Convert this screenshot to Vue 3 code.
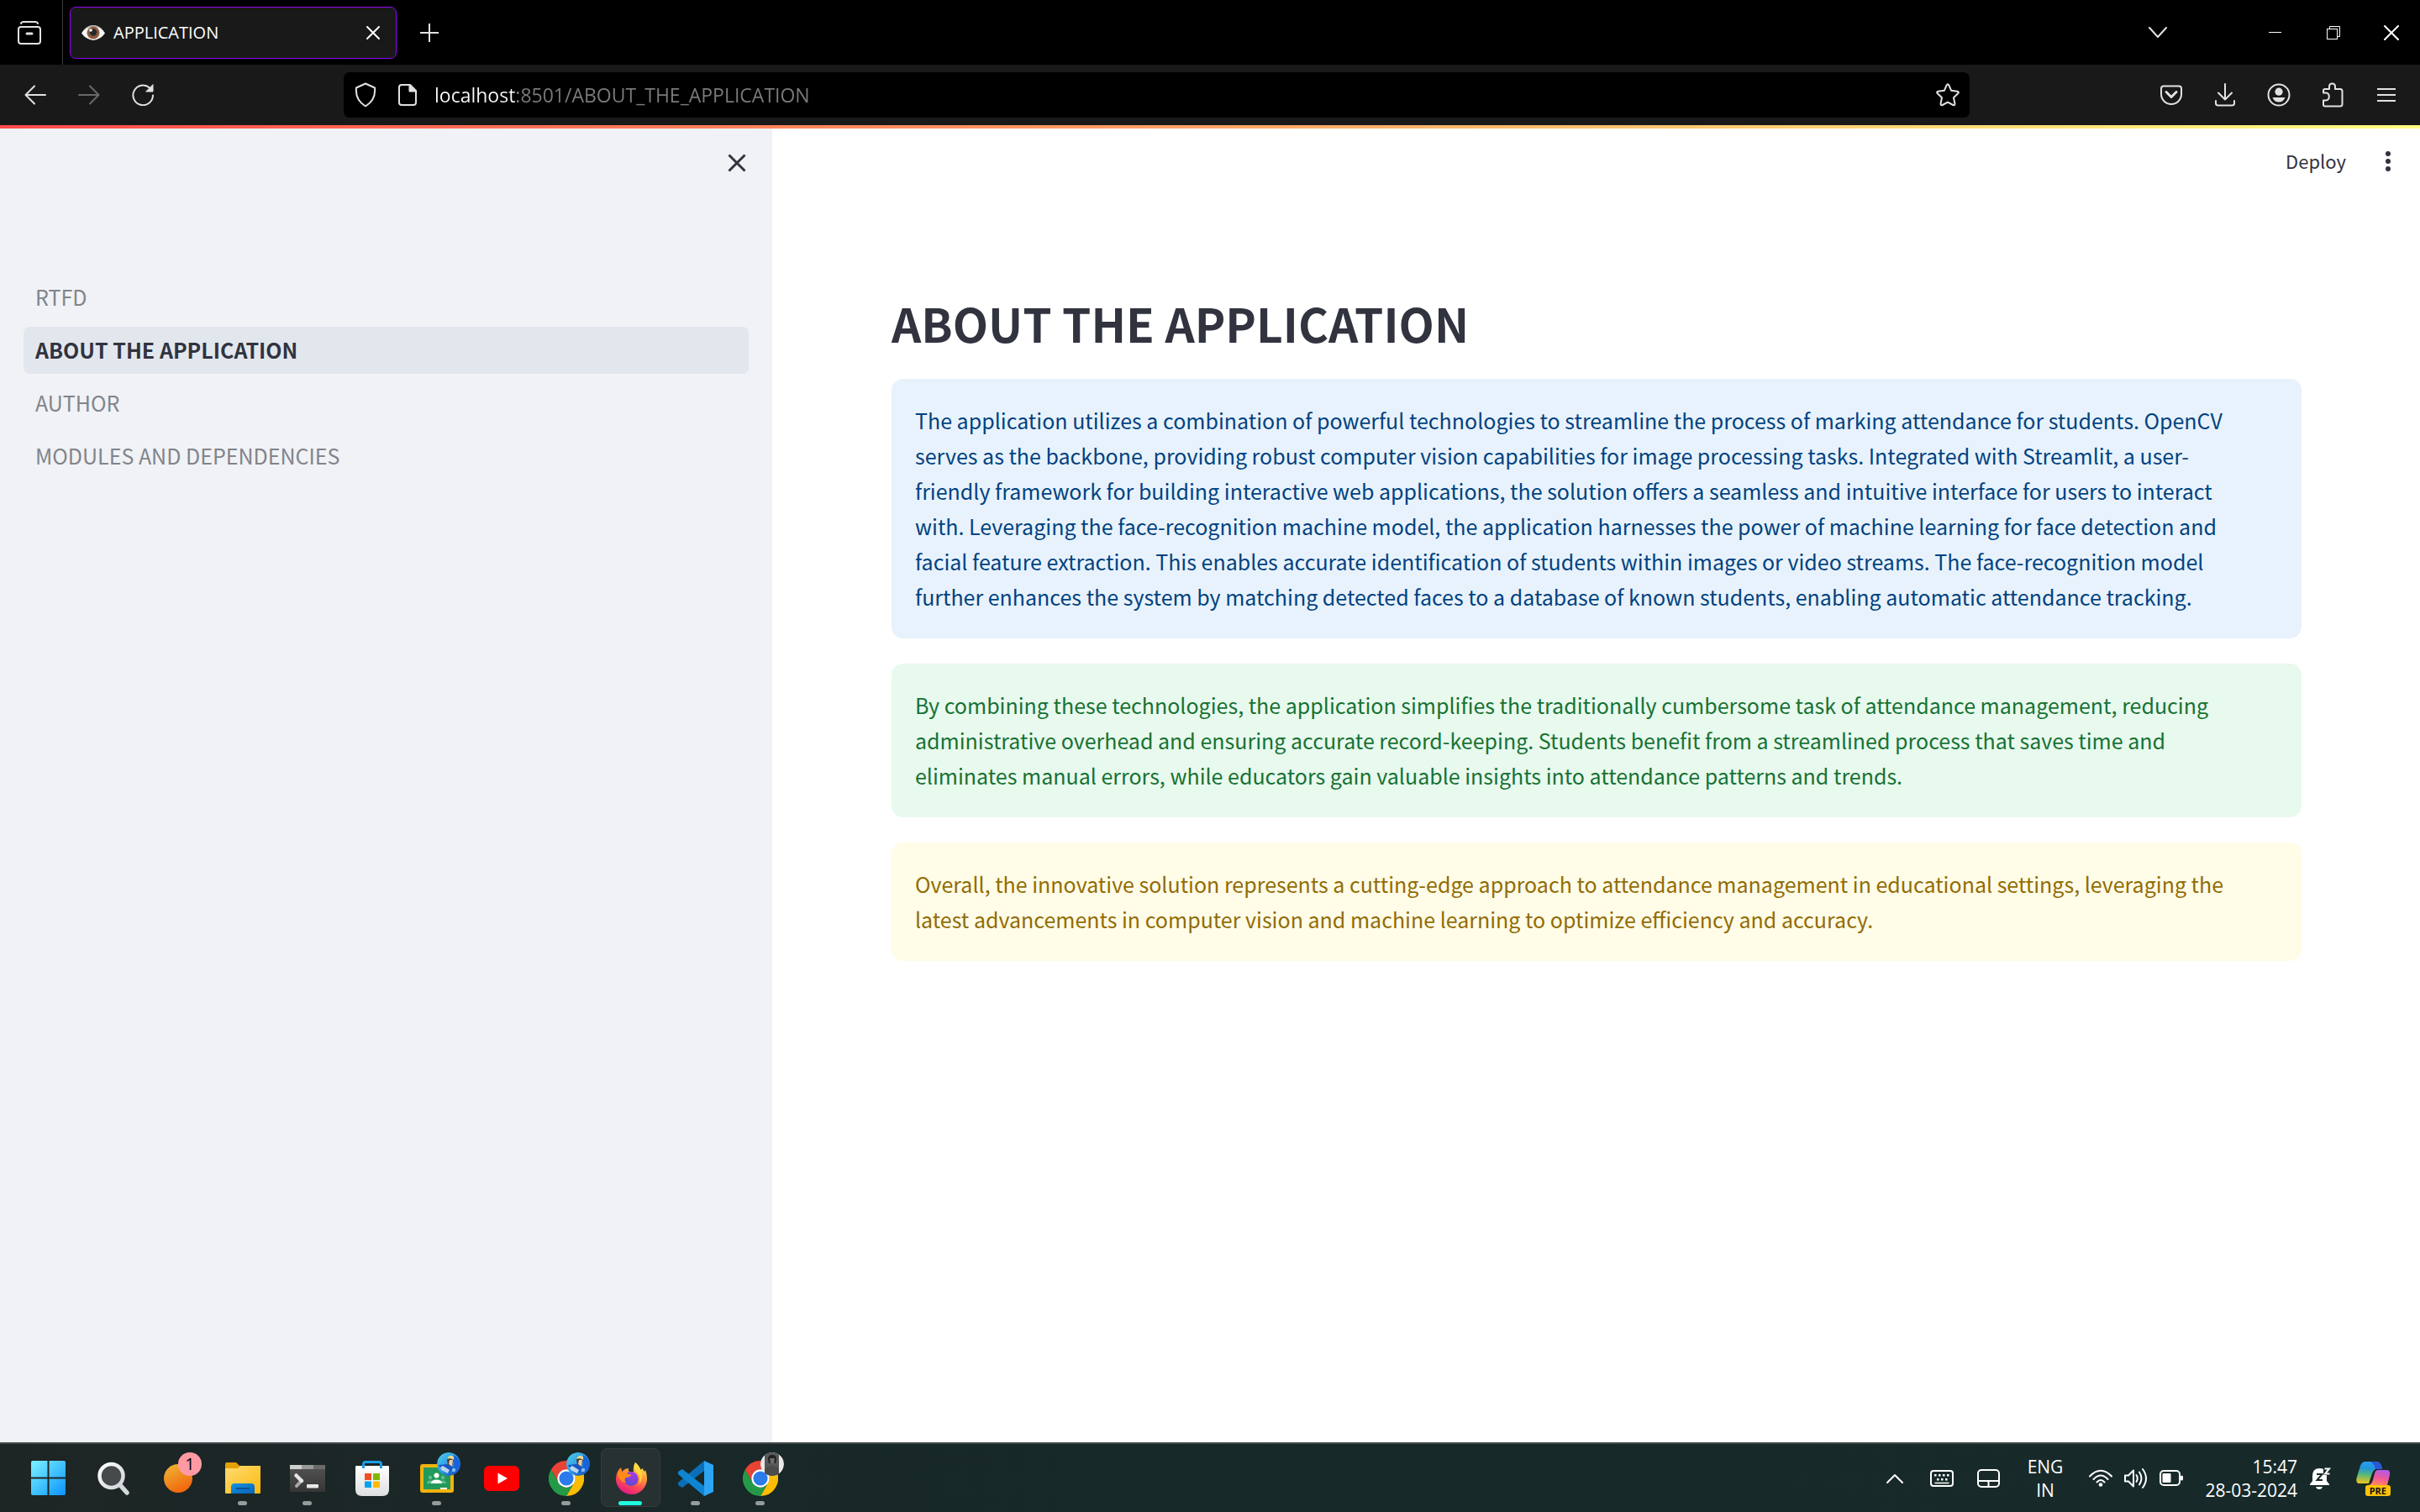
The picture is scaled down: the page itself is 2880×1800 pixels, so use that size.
<script setup>
import { ref } from 'vue'

const address = ref('localhost:8501/ABOUT_THE_APPLICATION')

const pages = [
  { name: 'RTFD' },
  { name: 'ABOUT THE APPLICATION', active: true },
  { name: 'AUTHOR' },
  { name: 'MODULES AND DEPENDENCIES' },
]

const alerts = [
  {
    kind: 'info',
    text: 'The application utilizes a combination of powerful technologies to streamline the process of marking attendance for students. OpenCV serves as the backbone, providing robust computer vision capabilities for image processing tasks. Integrated with Streamlit, a user-friendly framework for building interactive web applications, the solution offers a seamless and intuitive interface for users to interact with. Leveraging the face-recognition machine model, the application harnesses the power of machine learning for face detection and facial feature extraction. This enables accurate identification of students within images or video streams. The face-recognition model further enhances the system by matching detected faces to a database of known students, enabling automatic attendance tracking.',
  },
  {
    kind: 'success',
    text: 'By combining these technologies, the application simplifies the traditionally cumbersome task of attendance management, reducing administrative overhead and ensuring accurate record-keeping. Students benefit from a streamlined process that saves time and eliminates manual errors, while educators gain valuable insights into attendance patterns and trends.',
  },
  {
    kind: 'warning',
    text: 'Overall, the innovative solution represents a cutting-edge approach to attendance management in educational settings, leveraging the latest advancements in computer vision and machine learning to optimize efficiency and accuracy.',
  },
]
</script>

<template>
  <div class="screen">
    <svg class="defs" aria-hidden="true">
      <defs>
        <linearGradient id="gWin" x1="0" y1="0" x2="1" y2="1"><stop offset="0" stop-color="#7df3ff" /><stop offset="1" stop-color="#0a93ff" /></linearGradient>
        <linearGradient id="gLens" x1="0" y1="0" x2="1" y2="1"><stop offset="0" stop-color="#ffffff" /><stop offset="1" stop-color="#cfd4da" /></linearGradient>
        <linearGradient id="gOrange" x1="0.2" y1="0" x2="0.7" y2="1"><stop offset="0" stop-color="#eeb233" /><stop offset="1" stop-color="#f2620c" /></linearGradient>
        <linearGradient id="gFolder" x1="0" y1="0" x2="1" y2="1"><stop offset="0" stop-color="#ffdc74" /><stop offset="1" stop-color="#fbb90c" /></linearGradient>
        <linearGradient id="gBlue" x1="0" y1="0" x2="1" y2="1"><stop offset="0" stop-color="#1593e0" /><stop offset="1" stop-color="#0862b8" /></linearGradient>
        <linearGradient id="gTerm" x1="0" y1="0" x2="0" y2="1"><stop offset="0" stop-color="#545454" /><stop offset="1" stop-color="#363636" /></linearGradient>
        <linearGradient id="gBag" x1="0" y1="0" x2="0" y2="1"><stop offset="0" stop-color="#ffffff" /><stop offset="1" stop-color="#dedfe1" /></linearGradient>
        <linearGradient id="gFox" x1="0.8" y1="0" x2="0.3" y2="1"><stop offset="0" stop-color="#fff44f" /><stop offset="0.35" stop-color="#ffa136" /><stop offset="0.65" stop-color="#ff4f50" /><stop offset="1" stop-color="#e31587" /></linearGradient>
        <radialGradient id="gGlobe" cx="0.6" cy="0.2" r="0.8"><stop offset="0" stop-color="#a838e8" /><stop offset="1" stop-color="#5a4bd0" /></radialGradient>
        <linearGradient id="gCopL" x1="0.3" y1="0" x2="0.2" y2="1"><stop offset="0" stop-color="#2a9df0" /><stop offset="0.3" stop-color="#2196d8" /><stop offset="0.6" stop-color="#5cb975" /><stop offset="1" stop-color="#f5c417" /></linearGradient>
        <linearGradient id="gCopR" x1="0.6" y1="0" x2="0.3" y2="1"><stop offset="0" stop-color="#b25ae6" /><stop offset="0.5" stop-color="#f0589a" /><stop offset="1" stop-color="#ff8a5c" /></linearGradient>
        <linearGradient id="gPhoto" x1="0" y1="0" x2="1" y2="1"><stop offset="0" stop-color="#4fd0e8" /><stop offset="0.5" stop-color="#2f9ae6" /><stop offset="1" stop-color="#0b3fb4" /></linearGradient>
        <clipPath id="disc"><circle cx="14" cy="14" r="14" /></clipPath>
        <symbol id="chrome" viewBox="0 0 48 48">
          <path d="M3.2 12A24 24 0 0 1 44.8 12H24A12 12 0 0 0 13.6 30Z" fill="#ea4335" />
          <path d="M3.2 12A24 24 0 0 1 44.8 12H24A12 12 0 0 0 13.6 30Z" fill="#fbbc05" transform="rotate(120 24 24)" />
          <path d="M3.2 12A24 24 0 0 1 44.8 12H24A12 12 0 0 0 13.6 30Z" fill="#249a48" transform="rotate(240 24 24)" />
          <circle cx="24" cy="24" r="12.2" fill="#fff" /><circle cx="24" cy="24" r="9.8" fill="#2b7bea" />
        </symbol>
        <symbol id="photo" viewBox="0 0 28 28">
          <g clip-path="url(#disc)"><rect width="28" height="28" fill="url(#gPhoto)" /><path d="M20 3Q30 8 27 24L20 22Z" fill="#1763dc" /><path d="M12 9Q12 5 16 5T20 9L18 17L13 15Z" fill="#4a3d33" /><path d="M12 8Q13 4 17 4T20 9Q16 6 12 8Z" fill="#ecd98a" /><path d="M15 9L19 9L18 17L14 14Z" fill="#e4cfae" /><path d="M2 15L12 14L20 18L14 25L5 21Z" fill="#1557c4" /><path d="M4 18L7 16L15 21L13 25L5 21Z" fill="#b9d4ee" /><circle cx="20" cy="21" r="2.200" fill="#86bdf4" /></g>
        </symbol>
      </defs>
    </svg>

    <header class="tabs">
      <button class="view" aria-label="Firefox View"><svg width="28" height="28" viewBox="0 0 28 28" class="ln"><path d="M4 3Q4.500 1 7 1H21Q23.500 1 24 3" /><rect x="1" y="7" width="26" height="20" rx="3" /><path d="M11 15H17" stroke-width="3" /></svg></button>
      <div class="tab">
        <svg width="28" height="18" viewBox="0 0 28 18"><path d="M0 9.500Q5 1 14 0Q23 1 28 9.500Q23 17 14 18Q5 17 0 9.500Z" fill="#f6f6f6" /><path d="M3 5Q8 0 14 0T25 5Q19 2 14 2T3 5Z" fill="#b7b4b2" /><circle cx="14" cy="9" r="7.500" fill="#8d5a3c" /><circle cx="14" cy="8.500" r="4.200" fill="#26292c" /><circle cx="11" cy="6" r="1.800" fill="#fff" /></svg>
        <span class="tab-title">APPLICATION</span>
        <button class="tab-close" aria-label="Close tab"><svg width="16" height="16" viewBox="0 0 16 16" class="ln thin"><path d="M1 1L15 15M15 1L1 15" /></svg></button>
      </div>
      <button class="tool" aria-label="New tab"><svg width="22" height="22" viewBox="0 0 22 22" class="ln"><path d="M11 0V22M0 11H22" /></svg></button>
      <span class="fill"></span>
      <button class="tool all-tabs" aria-label="List all tabs"><svg width="22" height="14" viewBox="0 0 22 14" class="ln"><path d="M1 1L11 12L21 1" /></svg></button>
      <button class="win" aria-label="Minimize"><svg width="16" height="16" viewBox="0 0 16 16"><path d="M0 7.500H15" stroke="#fff" /></svg></button>
      <button class="win" aria-label="Restore"><svg width="16" height="16" viewBox="0 0 16 16" fill="none" stroke="#fff"><path d="M3.500 3V.5H15.500V12.500H12.500" /><rect x=".5" y="3.500" width="12" height="12" /></svg></button>
      <button class="win" aria-label="Close"><svg width="18" height="18" viewBox="0 0 18 18" class="ln thin"><path d="M1 1L17 17M17 1L1 17" /></svg></button>
    </header>

    <div class="toolbar">
      <button class="tool" aria-label="Back"><svg width="26" height="24" viewBox="0 0 26 24" class="ln"><path d="M25 12H2M12 1.500L1.500 12L12 22.500" /></svg></button>
      <button class="tool dim" aria-label="Forward"><svg width="26" height="24" viewBox="0 0 26 24" class="ln"><path d="M1 12H24M14 1.500L24.500 12L14 22.500" /></svg></button>
      <button class="tool" aria-label="Reload"><svg width="26" height="26" viewBox="0 0 26 26" class="ln"><path d="M25 13.500A11.800 11.800 0 1 1 21 4.500" /><path d="M25 1V9H17Z" fill="#e2e2e2" stroke-width="1" /></svg></button>
      <div class="urlbar">
        <button class="shield" aria-label="Tracking protection"><svg width="26" height="30" viewBox="0 0 26 30" class="ln"><path d="M13 1.500L24 6.500Q25.500 21 13 28.500Q.5 21 2 6.500Z" /></svg></button>
        <button class="site" aria-label="Site information"><svg width="22" height="26" viewBox="0 0 22 26" class="ln"><path d="M4 1H14L21 8V22Q21 25 18 25H4Q1 25 1 22V4Q1 1 4 1Z" /><path d="M13 1V9H21Z" fill="#e2e2e2" stroke-width="1" /></svg></button>
        <input v-model="address" class="address" type="text" aria-label="Address" />
        <button class="star" aria-label="Bookmark"><svg width="28" height="28" viewBox="0 0 28 28" class="ln"><path d="M12.700 2.300Q14 .2 15.300 2.300L18.200 8.800L25.200 9.700Q27.800 10.300 26.200 12.300L21 17.200L22.400 24.300Q22.600 26.800 20.300 26L14 22.600L7.700 26Q5.400 26.800 5.600 24.300L7 17.200L1.800 12.300Q.2 10.300 2.800 9.700L9.800 8.800Z" /></svg></button>
      </div>
      <button class="tool" aria-label="Pocket"><svg width="26" height="24" viewBox="0 0 26 24" class="ln"><path d="M4 1.500H22Q25 1.500 25 4.500V11A12 12 0 0 1 1 11V4.500Q1 1.500 4 1.500Z" /><path d="M7 8.500L13 14.500L19 8.500" stroke-width="3" /></svg></button>
      <button class="tool" aria-label="Downloads"><svg width="24" height="28" viewBox="0 0 24 28" class="ln"><path d="M12 1V19M4 11.500L12 19.500L20 11.500M1 21V24Q1 26.500 4 26.500H20Q23 26.500 23 24V21" /></svg></button>
      <button class="tool" aria-label="Account"><svg width="28" height="28" viewBox="0 0 28 28" class="ln"><circle cx="14" cy="14" r="12.500" /><g fill="#e2e2e2" stroke="none"><circle cx="14" cy="10.200" r="4.600" /><path d="M6.500 17H21.500Q19.500 22.500 14 22.500T6.500 17Z" /></g></svg></button>
      <button class="tool" aria-label="Extensions"><svg width="26" height="30" viewBox="0 0 26 30" class="ln"><path d="M2 12V9.500Q2 8 4 8H9V5Q9 1.500 12.500 1.500T16 5V8H22Q24.500 8 24.500 10.500V26Q24.500 28.500 22 28.500H4Q2 28.500 2 26.500V21.500H5Q8.800 21 8.800 17T5 12.500H2Z" /></svg></button>
      <button class="tool" aria-label="Menu"><svg width="22" height="18" viewBox="0 0 22 18" class="ln"><path d="M0 2H22M0 9H22M0 16H22" /></svg></button>
    </div>

    <div class="ribbon"></div>

    <div class="page">
      <aside class="sidebar">
        <button class="collapse" aria-label="Close sidebar"><svg width="22" height="22" viewBox="0 0 22 22" fill="none" stroke="#31333f" stroke-width="3"><path d="M1.500 1.500L20.500 20.500M20.500 1.500L1.500 20.500" /></svg></button>
        <nav class="nav">
          <a v-for="p in pages" :key="p.name" href="#" :class="{ active: p.active }">{{ p.name }}</a>
        </nav>
      </aside>
      <main class="main">
        <div class="actions">
          <button class="deploy">Deploy</button>
          <button class="dots" aria-label="Main menu"><svg width="8" height="26" viewBox="0 0 8 26" fill="#31333f"><circle cx="4" cy="4" r="3" /><circle cx="4" cy="13" r="3" /><circle cx="4" cy="22" r="3" /></svg></button>
        </div>
        <h1>ABOUT THE APPLICATION</h1>
        <p v-for="a in alerts" :key="a.kind" class="alert" :class="a.kind">{{ a.text }}</p>
      </main>
    </div>

    <footer class="taskbar">
      <button class="app" aria-label="Start"><svg width="41" height="41" viewBox="0 0 41 41" fill="url(#gWin)"><path d="M2 0H19.500V19.500H0V2Q0 0 2 0ZM21.500 0H39Q41 0 41 2V19.500H21.500ZM0 21.500H19.500V41H2Q0 41 0 39ZM21.500 21.500H41V39Q41 41 39 41H21.500Z" /></svg></button>
      <button class="app" aria-label="Search"><svg width="38" height="40" viewBox="0 0 38 40"><path d="M27 28L35 37" stroke="#d3d7dc" stroke-width="5.500" stroke-linecap="round" /><circle cx="16.500" cy="17" r="14" fill="#454b4b" stroke="url(#gLens)" stroke-width="4.500" /></svg></button>
      <button class="app" aria-label="Widgets"><svg width="34" height="34" viewBox="0 0 34 34"><circle cx="17" cy="17" r="17" fill="url(#gOrange)" /></svg><span class="badge count">1</span></button>
      <button class="app run" aria-label="File Explorer"><svg width="42" height="38" viewBox="0 0 42 38"><path d="M0 8V2Q0 0 2 0H13L17 4H40V8Z" fill="#e3a008" /><path d="M0 7H15L18 4H42V36Q42 37 41 37H1Q0 37 0 36Z" fill="url(#gFolder)" /><path d="M7 37V29Q7 25 11 25H31Q35 25 35 29V37Z" fill="url(#gBlue)" /><path d="M13 31H29" stroke="#0a5297" stroke-width="2" /></svg></button>
      <button class="app run" aria-label="Terminal"><svg width="42" height="32" viewBox="0 0 42 32"><rect width="42" height="32" rx="1.500" fill="url(#gTerm)" /><path d="M0 0H14V5H0Z" fill="#cfcfcf" /><path d="M14 0H28V5H14Z" fill="#999" /><path d="M28 0H42V5H28Z" fill="#6a6a6a" /><path d="M14 18.500L8 25" stroke="#a9a9a9" stroke-width="4" stroke-linecap="round" /><path d="M7.500 12.500L14 19" stroke="#e6e6e6" stroke-width="4.500" stroke-linecap="round" /><rect x="20" y="23" width="14" height="4.500" rx="1" fill="#e8e8e8" /></svg></button>
      <button class="app" aria-label="Microsoft Store"><svg width="40" height="42" viewBox="0 0 40 42"><path d="M0 7Q0 6 1 6H39Q40 6 40 7V34Q40 42 32 42H8Q0 42 0 34Z" fill="url(#gBag)" /><path d="M9.500 9V4Q9.500 1.500 12 1.500H28Q30.500 1.500 30.500 4V9" fill="none" stroke="#1b9fe6" stroke-width="3" /><path d="M11 15H19V23H11Z" fill="#f25022" /><path d="M21 15H29V23H21Z" fill="#7fba00" /><path d="M11 24.500H19V32H11Z" fill="#00a4ef" /><path d="M21 24.500H29V32H21Z" fill="#ffb900" /></svg></button>
      <button class="app run" aria-label="Classroom"><svg width="40" height="34" viewBox="0 0 40 34"><rect width="40" height="34" rx="3" fill="#f3b40d" /><path d="M4 4H36V30H4Z" fill="#229a5b" /><g fill="#62bb8a"><circle cx="12" cy="16" r="2.200" /><circle cx="27" cy="16" r="2.200" /><path d="M8 23Q8 19.500 12 19.500T16 23ZM23 23Q23 19.500 27 19.500T31 23Z" /></g><circle cx="19.500" cy="13.500" r="3" fill="#fff" /><path d="M13 23Q13 18.500 19.500 18.500T26 23Z" fill="#fff" /><path d="M24 28H32V30H24Z" fill="#fff" /></svg><svg class="badge"><use href="#photo" /></svg></button>
      <button class="app" aria-label="YouTube"><svg width="42" height="30" viewBox="0 0 42 30"><rect width="42" height="30" rx="6" fill="#f00" /><path d="M16.500 8.500L28 15L16.500 21.500Z" fill="#fff" /></svg></button>
      <button class="app run" aria-label="Chrome"><svg width="42" height="42"><use href="#chrome" /></svg><svg class="badge"><use href="#photo" /></svg></button>
      <button class="app run current" aria-label="Firefox"><svg width="38" height="38" viewBox="0 0 38 38"><path d="M24 0Q29 4 30 9L33 7Q33 9 35 11L36 9Q38 14 38 19A18.500 18.500 0 0 1 1 20Q1 11 7 6L8 11Q12 7 16 7Q15 9 17 11H22Q21 4 24 0Z" fill="url(#gFox)" /><circle cx="19" cy="19.500" r="8.500" fill="url(#gGlobe)" /><path d="M7 7L8 12Q13 11 16 14Q20 14 19 15.500Q17 18 13 18Q10 20 13 24Q6 24 3 15Q4 10 7 7Z" fill="#ff8a16" /><path d="M24 0Q31 6 32 13Q33 21 28 27Q31 17 26 12Q21 8 24 0Z" fill="#ffdc3e" opacity=".8" /></svg></button>
      <button class="app run" aria-label="Visual Studio Code"><svg width="42" height="42" viewBox="0 0 42 42"><path d="M31 0L42 5V37L31 42Z" fill="#2da4f4" /><path d="M31 0V12L5 32L0 29V26Z" fill="#0a6fb8" /><path d="M31 42V30L5 10L0 13V16Z" fill="#0f84d2" /></svg></button>
      <button class="app run" aria-label="Chrome profile"><svg width="42" height="42"><use href="#chrome" /></svg><svg class="badge" viewBox="0 0 28 28"><g clip-path="url(#disc)"><path d="M0 0H28V28H0Z" fill="#e9e9e9" /><path d="M5 0H22V28H5Z" fill="#585858" /><path d="M9 8Q9 3 14 3T19 8L18 13H10Z" fill="#222" /><path d="M11 7H17L16 13H12Z" fill="#6c6c6c" /><path d="M5 20Q13 12 22 19V28H5Z" fill="#4b4b4b" /></g></svg></button>
      <span class="fill"></span>
      <div class="tray">
        <button class="t-up" aria-label="Show hidden icons"><svg width="20" height="12" viewBox="0 0 20 12" class="ln white"><path d="M1 11L10 2L19 11" /></svg></button>
        <button class="t-key" aria-label="Touch keyboard"><svg width="28" height="20" viewBox="0 0 28 20" class="ln white"><rect x="1" y="1" width="26" height="18" rx="3" /><g stroke="none" fill="#fff"><path d="M5 5H7.500V7.500H5ZM10 5H12.500V7.500H10ZM15 5H17.500V7.500H15ZM20 5H22.500V7.500H20ZM8 10H10.500V12.500H8ZM13 10H15.500V12.500H13ZM18 10H20.500V12.500H18Z" /></g><path d="M6 15.500H22" stroke-width="1.500" /></svg></button>
        <button class="t-pad" aria-label="Virtual touchpad"><svg width="27" height="22" viewBox="0 0 27 22" class="ln white"><rect x="1" y="1" width="25" height="20" rx="4" /><path d="M1 14H26M13.500 14V21" /></svg></button>
        <button class="lang">ENG<br />IN</button>
        <button class="quick" aria-label="Network, sound, battery">
          <svg width="28" height="21" viewBox="0 0 28 21" class="ln white"><path d="M1 8.500Q14-5 27 8.500M5.500 12Q14 3 22.500 12M9.500 15.500Q14 10.500 18.500 15.500" /><circle cx="14" cy="18.500" r="2.300" fill="#fff" stroke="none" /></svg>
          <svg width="28" height="26" viewBox="0 0 28 26" class="ln white"><path d="M1 9.500H5L11 3.500V22.500L5 16.500H1Z" /><path d="M14.500 9Q17 13 14.500 17M18 5.500Q23 13 18 20.500M22 2Q30 13 22 24" /></svg>
          <svg width="28" height="19" viewBox="0 0 28 19" class="ln white"><rect x="1" y="1" width="23" height="17" rx="4" /><rect x="3.500" y="4" width="10" height="11" rx="1" fill="#fff" stroke="none" /><path d="M26.500 8V11" stroke-width="3" /></svg>
        </button>
        <button class="clock"><time>15:47<br />28-03-2024</time></button>
        <button class="t-bell" aria-label="Notifications"><svg width="26" height="28" viewBox="0 0 26 28"><path d="M3 17V11Q3 2 11.500 2T20 11V17L23 21V22H0V21Z" fill="#fff" /><path d="M7 24H15Q14 27 11 27T7 24Z" fill="#fff" /><path d="M8 9H14.500L8.500 16H15" fill="none" stroke="#172827" stroke-width="2" /><path d="M16 1H26V10H16Z" fill="#172827" /><path d="M17.500 2.500H23L18 8.500H23.500" fill="none" stroke="#fff" stroke-width="2" /></svg></button>
        <button class="copilot" aria-label="Copilot"><svg width="42" height="40" viewBox="0 0 42 40"><path d="M11 0H25Q30 1 31 9H23Q20 10 18 17L15 26H3Q-1 25 1 18L5 5Q7 0 11 0Z" fill="url(#gCopL)" /><path d="M17 0H25Q30 1 31 9H23Q22 3 17 0Z" fill="#2a56d8" /><path d="M26 10H37Q41 10 40 16L37 28H14Q18 28 20 22L22 14Q23 10 26 10Z" fill="url(#gCopR)" /></svg><span class="pre">PRE</span></button>
      </div>
    </footer>
  </div>
</template>

<style>
body { background: #fff; }
</style>

<style scoped>
.screen {
  min-height: 100vh;
  display: flex;
  flex-direction: column;
  font-family: "Open Sans", "Noto Sans", sans-serif;
}
button, input {
  margin: 0;
  padding: 0;
  border: 0;
  background: none;
  color: inherit;
  font: inherit;
}
button {
  display: flex;
  align-items: center;
  justify-content: center;
  flex: none;
}
svg { display: block; }
.defs { position: absolute; width: 0; height: 0; }
.ln { fill: none; stroke: #e2e2e2; stroke-width: 2; stroke-linejoin: round; stroke-linecap: round; }
.thin { stroke-width: 2; stroke: #fff; }
.white { stroke: #fff; }
.fill { flex: 1; }

.tabs { display: flex; align-items: center; height: 77px; background: #000; color: #fff; }
.view { width: 75px; height: 77px; padding-right: 4px; box-sizing: border-box; border-right: 1px solid #3d3d3d; }
.tab {
  display: flex;
  align-items: center;
  gap: 10px;
  box-sizing: border-box;
  width: 389px;
  height: 62px;
  margin-left: 8px;
  margin-right: 7px;
  padding: 0 19px 0 13px;
  background: #191919;
  border: 1px solid #8d07f0;
  border-radius: 7px;
}
.tab-title { flex: 1; font-size: 20px; line-height: 28px; }
.tool { width: 64px; height: 54px; }
.all-tabs { margin-right: 73px; }
.win { width: 69px; height: 77px; }

.toolbar { display: flex; align-items: center; height: 72px; padding: 0 8px 0 10px; background: #191919; }
.dim { opacity: 0.4; }
.urlbar { flex: 1; display: flex; align-items: center; height: 54px; margin: 0 208px 0 207px; background: #000; border-radius: 7px; }
.shield { width: 52px; }
.site { width: 48px; }
.star { width: 52px; }
.address {
  flex: 1;
  min-width: 0;
  height: 54px;
  margin-left: 8px;
  font-size: 23px;
  color: transparent;
  background: linear-gradient(90deg, #fbfbfb 97px, #7b7b7b 97px);
  -webkit-background-clip: text;
  background-clip: text;
}

.ribbon { height: 4px; background: linear-gradient(90deg, #ff4b4b, #fffd80); }
.page { flex: 1; display: flex; font-family: "Noto Sans CJK SC", "Noto Sans", sans-serif; }
.sidebar { box-sizing: border-box; width: 919px; padding: 0 28px; background: #f0f2f6; }
.collapse { width: 40px; height: 40px; margin: 21px -6px 112px auto; }
.nav { display: flex; flex-direction: column; gap: 7px; }
.nav a {
  height: 56px;
  padding: 0 14px;
  border-radius: 7px;
  color: #82848b;
  font-size: 25px;
  line-height: 55px;
  text-decoration: none;
}
.nav .active { background: #e2e7ee; color: #31333f; font-weight: 600; }

.main { flex: 1; min-width: 0; padding: 0 141px 0 142px; background: #fff; }
.actions { display: flex; justify-content: flex-end; align-items: center; height: 78px; margin-right: -115px; gap: 37px; }
.deploy { padding-bottom: 3px; color: #31333f; font-size: 22px; }
.dots { width: 25px; height: 40px; }
h1 { margin: 112px 0 26px; color: #31333f; font-size: 55px; line-height: 82px; font-weight: 600; }
.alert { margin: 0 0 30px; padding: 28px 56px 29px 28px; border-radius: 14px; font-size: 25px; line-height: 42px; }
.info { background: #e8f2fc; color: #004280; }
.success { background: #e8f9ee; color: #177233; }
.warning { background: #fffce7; color: #926c05; }

.taskbar {
  display: flex;
  align-items: center;
  box-sizing: border-box;
  height: 83px;
  padding: 0 0 0 19px;
  border-top: 2px solid #434a4a;
  background: linear-gradient(90deg, #1e2525, #182828 35%, #172a29);
  color: #fff;
}
.app { position: relative; width: 77px; height: 81px; }
.app.run::after {
  content: "";
  position: absolute;
  left: 33px;
  bottom: 8px;
  width: 11px;
  height: 5px;
  border-radius: 3px;
  background: #969b9b;
}
.app.current::before {
  content: "";
  position: absolute;
  inset: 5px 3px 6px 3px;
  border: 1px solid #343c3c;
  border-radius: 8px;
  background: #283131;
}
.app.current svg { position: relative; }
.app.current::after { left: 24px; width: 28px; background: #20f8e0; }
.badge { position: absolute; left: 39px; top: 10px; width: 28px; height: 28px; border-radius: 14px; }
.count { background: #ff9aa5; color: #000; font-size: 20px; line-height: 28px; text-align: center; }

.tray { display: flex; align-items: center; font-size: 21px; line-height: 28px; }
.t-up { width: 50px; }
.t-key { width: 62px; }
.t-pad { width: 48px; }
.lang { width: 88px; }
.quick { gap: 14px; width: 128px; }
.clock { width: 128px; justify-content: flex-end; text-align: right; }
.t-bell { width: 56px; }
.copilot { position: relative; width: 69px; margin-right: 21px; height: 60px; }
.pre {
  position: absolute;
  right: 14px;
  bottom: 9px;
  padding: 0 5px;
  border-radius: 3px;
  background: #ffc20a;
  color: #111;
  font-size: 11px;
  font-weight: 700;
  line-height: 13px;
}
</style>
